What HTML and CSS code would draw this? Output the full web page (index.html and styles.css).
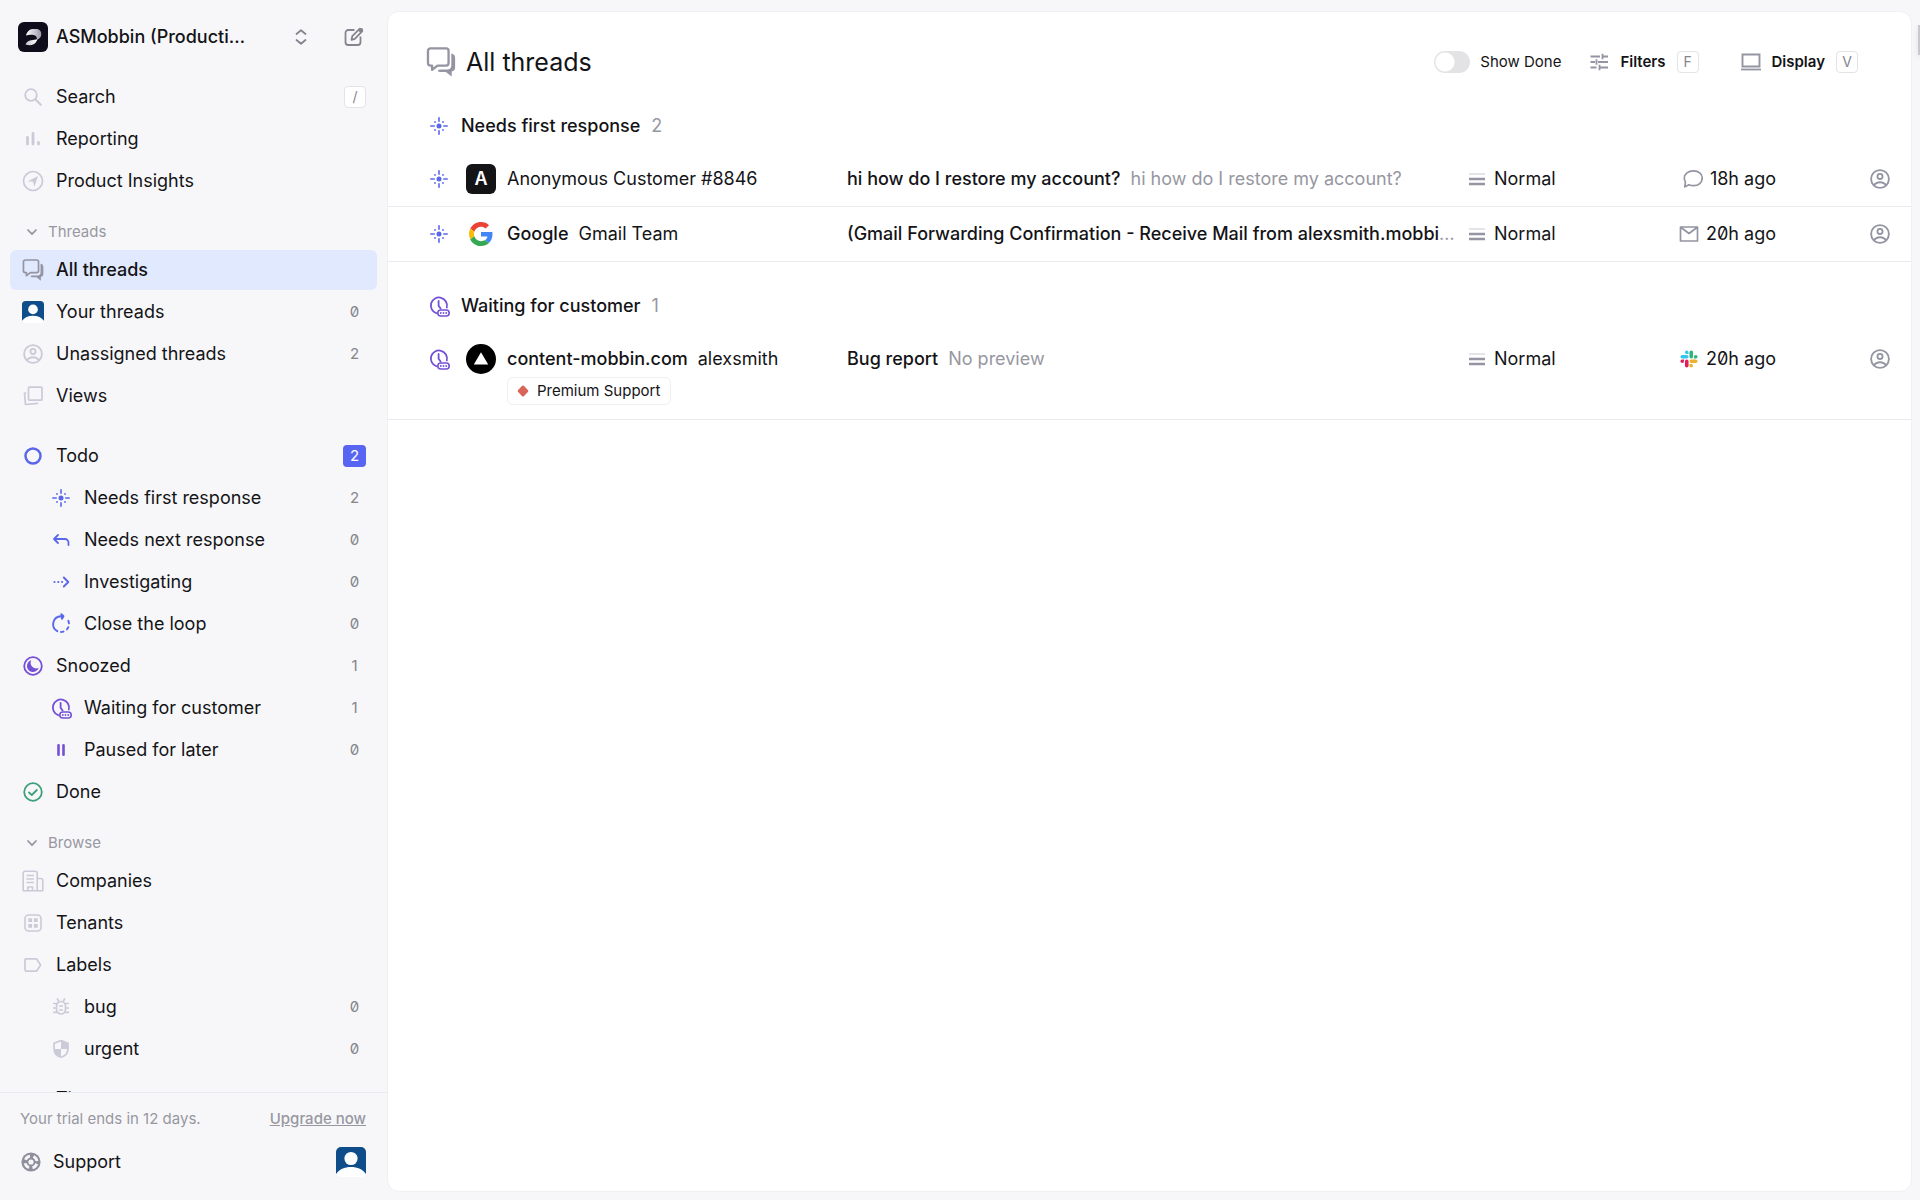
FILE: index.html
```html
<!DOCTYPE html>
<html lang="en">
<head>
  <meta charset="UTF-8">
  <meta name="viewport" content="width=device-width, initial-scale=1.0">
  <title>All threads</title>
  <link rel="stylesheet" href="styles.css">
</head>
<body>
  <!-- Shared icons -->
  <svg class="sprite" aria-hidden="true">
    <symbol id="i-threads" viewBox="1 1.500 21.500 22">
      <path d="M4 2.500h11.500A1.800 1.800 0 0 1 17.300 4.300v9a1.800 1.800 0 0 1-1.800 1.800H9.200L5.200 18.200V15.100H4A1.800 1.800 0 0 1 2.200 13.300v-9A1.800 1.800 0 0 1 4 2.500z" fill="none" stroke="currentColor" stroke-width="1.700" stroke-linejoin="round"/>
      <path d="M19.300 6.300c1.700.3 2.800 1.400 2.800 3v7.200c0 1.700-1 2.700-2.500 2.900v3.800l-4.300-3.400H11c-1 0-1.500-.4-1.500-.8 0-.6.600-.9 1.500-1h5.300c2 0 3-1 3-3z" fill="currentColor"/>
    </symbol>
    <symbol id="i-user" viewBox="0 0 24 24">
      <g fill="none" stroke="currentColor" stroke-width="2">
        <circle cx="12" cy="12" r="9.700"/>
        <circle cx="12" cy="9.200" r="2.800"/>
        <path d="M5.500 19c1.400-2.500 3.800-3.500 6.500-3.500s5.100 1 6.500 3.500"/>
      </g>
    </symbol>
    <symbol id="i-first" viewBox="0 0 20 20">
      <circle cx="10" cy="10" r="2.500" fill="currentColor"/>
      <path d="M10 1.800v3.400M10 14.800v3.400M1.800 10h3.400M14.800 10h3.400" stroke="currentColor" stroke-width="1.600" stroke-linecap="round"/>
      <g fill="currentColor"><circle cx="6" cy="6" r=".9"/><circle cx="14" cy="6" r=".9"/><circle cx="6" cy="14" r=".9"/><circle cx="14" cy="14" r=".9"/></g>
    </symbol>
    <symbol id="i-waiting" viewBox="0 0 22 22">
      <path d="M8.200 18.200A8.100 8.100 0 1 1 18.800 12.500M10.600 6v4.700l2 2.800" fill="none" stroke="currentColor" stroke-width="1.800" stroke-linecap="round"/>
      <rect x="9.800" y="15" width="11.400" height="6" rx="3" fill="none" stroke="currentColor" stroke-width="1.600"/>
      <g fill="currentColor"><circle cx="12.800" cy="18" r=".9"/><circle cx="15.500" cy="18" r=".9"/><circle cx="18.200" cy="18" r=".9"/></g>
    </symbol>
    <symbol id="i-chevron" viewBox="0 0 12 12">
      <path d="M2 4 6 8.200 10 4" fill="none" stroke="currentColor" stroke-width="1.800" stroke-linecap="round" stroke-linejoin="round"/>
    </symbol>
    <symbol id="i-priority" viewBox="0 0 16 14">
      <path d="M0 2h16" stroke="#e3e3e8" stroke-width="2"/>
      <path d="M0 7h16M0 12h16" stroke="currentColor" stroke-width="2.400"/>
    </symbol>
    <symbol id="i-avatar" viewBox="0 0 30 30">
      <rect width="30" height="30" rx="5" fill="#fdfeff"/>
      <path d="M5 0h20a5 5 0 0 1 5 5v22C27 22.500 21.500 20 15 20S3 22.500 0 27V5a5 5 0 0 1 5-5z" fill="#0f4c8a"/>
      <circle cx="15" cy="11.500" r="6.600" fill="#fdfeff"/>
    </symbol>
  </svg>

  <div class="app">
    <aside class="sidebar">
      <header class="workspace">
        <button class="workspace__switch" type="button">
          <svg class="workspace__logo" viewBox="0 0 30 30">
            <defs>
              <linearGradient id="logo-top" x1="0" y1="0" x2="1" y2="0"><stop offset="0" stop-color="#fff"/><stop offset="1" stop-color="#9c99a8"/></linearGradient>
              <linearGradient id="logo-bottom" x1="0" y1="0" x2="1" y2="0"><stop offset="0" stop-color="#c4c2cc"/><stop offset="1" stop-color="#fff"/></linearGradient>
            </defs>
            <rect width="30" height="30" rx="6" fill="#0f0c1c"/>
            <path d="M8 13.500C9.300 8.800 12 7 15.500 7h3c3 0 4.800 2.400 4.800 5 0 2.800-1.400 5-4.300 5.500 0-3-1.500-4.500-4.500-4.700-2.500-.2-4.500 0-6.500.7z" fill="url(#logo-top)"/>
            <path d="M7.500 22.500c1.200-2.800 3-4 5.500-4.300 2.500-.2 4.300-.4 6.500-1.200-1.300 4.200-4 6.200-7.500 6.200-1.700 0-3.200-.2-4.500-.7z" fill="url(#logo-bottom)"/>
          </svg>
          <span class="workspace__name">ASMobbin (Production)</span>
          <svg class="workspace__arrows" viewBox="0 0 12 16"><path d="M1.500 5 6 1.200 10.500 5M1.500 11 6 14.800 10.500 11" fill="none" stroke="currentColor" stroke-width="1.800" stroke-linecap="round" stroke-linejoin="round"/></svg>
        </button>
        <button class="icon-button" type="button" aria-label="New thread">
          <svg viewBox="0 0 20 20"><g fill="none" stroke="currentColor" stroke-width="1.800" stroke-linejoin="round"><path d="M10.500 3H4.200A2.700 2.700 0 0 0 1.500 5.700v9.600A2.700 2.700 0 0 0 4.200 18h9.600a2.700 2.700 0 0 0 2.700-2.700V9.500"/><path d="m7.500 12.800.8-3.600 7.500-7.500 2.500 2.500-7.500 7.600z"/></g><path d="m14 3.500 2-2c1.600-1.500 4.200 1 2.700 2.600l-2 2z" fill="currentColor"/></svg>
        </button>
      </header>

      <nav class="nav">
        <a class="nav__item" href="#">
          <svg class="nav__icon" viewBox="0 0 22 22"><circle cx="9" cy="9" r="5.800" fill="none" stroke="currentColor" stroke-width="1.800"/><path d="m13.300 13.300 5.500 5.500" stroke="currentColor" stroke-width="2" stroke-linecap="round"/></svg>
          <span class="nav__label">Search</span><kbd class="key key--filled">/</kbd>
        </a>
        <a class="nav__item" href="#">
          <svg class="nav__icon" viewBox="0 0 22 22"><path d="M5.500 9.500V16M11 5.500V16M16.500 14.500V16" stroke="currentColor" stroke-width="2.800" stroke-linecap="round"/></svg>
          <span class="nav__label">Reporting</span>
        </a>
        <a class="nav__item" href="#">
          <svg class="nav__icon" viewBox="0 0 22 22"><circle cx="11" cy="11" r="9.500" fill="none" stroke="currentColor" stroke-width="1.700"/><path d="M5.500 11.500 16 6l-3.500 10.500-1.700-5z" fill="currentColor"/></svg>
          <span class="nav__label">Product Insights</span>
        </a>

        <button class="nav__heading" type="button"><svg viewBox="0 0 12 12"><use href="#i-chevron"/></svg>Threads</button>
        <a class="nav__item nav__item--active" href="#">
          <svg class="nav__icon" viewBox="0 0 24 24"><use href="#i-threads"/></svg>
          <span class="nav__label">All threads</span>
        </a>
        <a class="nav__item" href="#">
          <svg class="nav__icon" viewBox="0 0 30 30"><use href="#i-avatar"/></svg>
          <span class="nav__label">Your threads</span><span class="count">0</span>
        </a>
        <a class="nav__item" href="#">
          <svg class="nav__icon" viewBox="0 0 24 24"><use href="#i-user"/></svg>
          <span class="nav__label">Unassigned threads</span><span class="count">2</span>
        </a>
        <a class="nav__item" href="#">
          <svg class="nav__icon" viewBox="0 0 22 22"><g fill="none" stroke="currentColor" stroke-width="1.700" stroke-linejoin="round" stroke-linecap="round"><rect x="6.500" y="2.200" width="13.500" height="13" rx="1"/><path d="M3.500 8 2.500 8.500l1 11 12-1.200"/></g></svg>
          <span class="nav__label">Views</span>
        </a>

        <a class="nav__item nav__item--spaced" href="#">
          <svg class="nav__icon nav__icon--blue" viewBox="0 0 22 22"><circle cx="11" cy="11" r="7.500" fill="none" stroke="currentColor" stroke-width="2.500"/></svg>
          <span class="nav__label">Todo</span><span class="count count--badge">2</span>
        </a>
        <a class="nav__item nav__item--nested" href="#">
          <svg class="nav__icon nav__icon--blue" viewBox="-1 -1 22 22"><use href="#i-first" width="20" height="20"/></svg>
          <span class="nav__label">Needs first response</span><span class="count">2</span>
        </a>
        <a class="nav__item nav__item--nested" href="#">
          <svg class="nav__icon nav__icon--blue" viewBox="0 0 22 22"><path d="M8 6 4 10l4 4M4.500 10H15a3.500 3.500 0 0 1 3.500 3.500v2.500" fill="none" stroke="currentColor" stroke-width="1.800" stroke-linecap="round" stroke-linejoin="round"/></svg>
          <span class="nav__label">Needs next response</span><span class="count">0</span>
        </a>
        <a class="nav__item nav__item--nested" href="#">
          <svg class="nav__icon nav__icon--blue" viewBox="0 0 22 22"><path d="m13.800 6.500 4.500 4.500-4.500 4.500" fill="none" stroke="currentColor" stroke-width="1.900" stroke-linecap="round" stroke-linejoin="round"/><g fill="currentColor"><circle cx="4.500" cy="11" r="1.100"/><circle cx="8.300" cy="11" r="1.100"/><circle cx="12.100" cy="11" r="1.100"/></g></svg>
          <span class="nav__label">Investigating</span><span class="count">0</span>
        </a>
        <a class="nav__item nav__item--nested" href="#">
          <svg class="nav__icon nav__icon--blue" viewBox="0 0 22 22"><g fill="none" stroke="currentColor" stroke-width="1.900" stroke-linecap="round" stroke-linejoin="round"><path d="M7.300 18.200A8 8 0 0 1 11 3.200h2"/><path d="M11.300 1.200 13.500 3.200 12 5.800z" fill="currentColor"/><path d="M11 19a8 8 0 0 0 8-8 8 8 0 0 0-3-6.200" stroke-dasharray="2.600 4"/></g></svg>
          <span class="nav__label">Close the loop</span><span class="count">0</span>
        </a>
        <a class="nav__item" href="#">
          <svg class="nav__icon nav__icon--purple" viewBox="0 0 22 22"><circle cx="11" cy="11" r="8.800" fill="none" stroke="currentColor" stroke-width="1.800"/><path d="M9.300 5.200a6 6 0 1 0 7.400 7.600 5.600 5.600 0 0 1-7.400-7.600z" fill="currentColor"/></svg>
          <span class="nav__label">Snoozed</span><span class="count">1</span>
        </a>
        <a class="nav__item nav__item--nested" href="#">
          <svg class="nav__icon nav__icon--purple" viewBox="0 0 22 22"><use href="#i-waiting"/></svg>
          <span class="nav__label">Waiting for customer</span><span class="count">1</span>
        </a>
        <a class="nav__item nav__item--nested" href="#">
          <svg class="nav__icon nav__icon--purple" viewBox="0 0 22 22"><path d="M8.500 6.200v9.600M13.500 6.200v9.600" stroke="currentColor" stroke-width="2.600" stroke-linecap="round"/></svg>
          <span class="nav__label">Paused for later</span><span class="count">0</span>
        </a>
        <a class="nav__item" href="#">
          <svg class="nav__icon nav__icon--green" viewBox="0 0 22 22"><g fill="none" stroke="currentColor" stroke-width="1.800" stroke-linecap="round" stroke-linejoin="round"><circle cx="11" cy="11" r="8.800"/><path d="m7 11.500 2.800 2.500 5-5"/></g></svg>
          <span class="nav__label">Done</span>
        </a>

        <button class="nav__heading" type="button"><svg viewBox="0 0 12 12"><use href="#i-chevron"/></svg>Browse</button>
        <a class="nav__item" href="#">
          <svg class="nav__icon" viewBox="0 0 22 22"><g fill="none" stroke="currentColor" stroke-width="1.600" stroke-linejoin="round"><path d="M1.200 20.800V3.200A2 2 0 0 1 3.200 1.200h10a2 2 0 0 1 2 2v17.600zM15.200 8.500h3.600a2 2 0 0 1 2 2v10.300h-5.600"/><path d="M4.500 5.500h7.500M4.500 9h7.500M4.500 12.500h7.500M5.800 20.500V17h4.700v3.500"/></g></svg>
          <span class="nav__label">Companies</span>
        </a>
        <a class="nav__item" href="#">
          <svg class="nav__icon" viewBox="0 0 22 22"><rect x="3" y="3" width="16" height="16" rx="3.500" fill="none" stroke="currentColor" stroke-width="1.600"/><path d="M6.300 6.300h3.800v3.800H6.300zM11.900 6.300h3.800v3.800h-3.800zM6.300 11.900h3.800v3.800H6.300zM11.900 11.900h3.800v3.800h-3.800z" fill="currentColor"/></svg>
          <span class="nav__label">Tenants</span>
        </a>
        <a class="nav__item" href="#">
          <svg class="nav__icon" viewBox="0 0 22 22"><path d="M4.300 4.800h10.200L18.600 11l-4.100 6.200H4.300a1.300 1.300 0 0 1-1.300-1.300V6.100a1.300 1.300 0 0 1 1.300-1.300z" fill="none" stroke="currentColor" stroke-width="1.700" stroke-linejoin="round"/></svg>
          <span class="nav__label">Labels</span>
        </a>
        <a class="nav__item nav__item--nested" href="#">
          <svg class="nav__icon" viewBox="0 0 22 22"><g fill="none" stroke="currentColor" stroke-width="1.700"><rect x="6.500" y="5.500" width="9" height="12.500" rx="4.500"/><path d="M7 2.500 9 5.500M15 2.500 13 5.500M3 7.500h4M3 12h3.500M3 16.300h4M15 7.500h4M15.500 12H19M15 16.300h4M9 10h4M9 14h4"/></g></svg>
          <span class="nav__label">bug</span><span class="count">0</span>
        </a>
        <a class="nav__item nav__item--nested" href="#">
          <svg class="nav__icon" viewBox="0 0 22 22"><path d="M11 2.600 4 5.200v5.300c0 4.300 3 7.600 7 8.700 4-1.100 7-4.400 7-8.700V5.200z" fill="none" stroke="currentColor" stroke-width="1.700" stroke-linejoin="round"/><path d="M11 2.600v8.400h7V5.200zM11 11v8.200c-4-1.100-6.500-4-7-8.200z" fill="currentColor"/></svg>
          <span class="nav__label">urgent</span><span class="count">0</span>
        </a>
        <a class="nav__item nav__item--last" href="#">
          <svg class="nav__icon" viewBox="0 0 22 22"></svg>
          <span class="nav__label">Tiers</span>
        </a>
      </nav>

      <footer class="sidebar__footer">
        <div class="trial"><span>Your trial ends in 12 days.</span><a class="trial__link" href="#">Upgrade now</a></div>
        <div class="support">
          <a class="support__link" href="#">
            <svg viewBox="0 0 20 20"><circle cx="10" cy="10" r="9.600" fill="currentColor"/><circle cx="10" cy="10" r="6" fill="none" stroke="#f7f7fa" stroke-width="2.800" stroke-dasharray="5.800 3.625" stroke-dashoffset="-1.800"/><circle cx="10" cy="10" r="2.600" fill="#f7f7fa"/></svg>
            Support
          </a>
          <button class="support__avatar" type="button" aria-label="Account"><svg viewBox="0 0 30 30"><use href="#i-avatar"/></svg></button>
        </div>
      </footer>
    </aside>

    <main class="panel">
      <header class="toolbar">
        <svg class="toolbar__icon" viewBox="0 0 24 24"><use href="#i-threads"/></svg>
        <h1 class="toolbar__title">All threads</h1>
        <label class="switch"><input class="switch__input" type="checkbox"><span>Show Done</span></label>
        <button class="tool-button" type="button">
          <svg viewBox="0 0 20 20"><path d="M1.500 4.500h9.500M14 4.500h5M13.500 1.800v5.400M1.500 10h4.500M9 10h10M7.500 7.200v5.600M1.500 15.500h6M11 15.500h8M10.500 12.800v5.400" fill="none" stroke="currentColor" stroke-width="1.800"/></svg>
          Filters <kbd class="key">F</kbd>
        </button>
        <button class="tool-button" type="button">
          <svg viewBox="0 0 20 20"><path d="M1.500 2.500h17v12h-17z" fill="none" stroke="currentColor" stroke-width="1.900"/><path d="M0 17.500h20" stroke="currentColor" stroke-width="1.800"/></svg>
          Display <kbd class="key">V</kbd>
        </button>
      </header>

      <section class="group">
        <h2 class="group__heading"><svg class="status status--blue" viewBox="-1 -1 22 22"><use href="#i-first" width="20" height="20"/></svg>Needs first response <span class="group__count">2</span></h2>
        <article class="thread">
          <svg class="status status--blue" viewBox="-1 -1 22 22"><use href="#i-first" width="20" height="20"/></svg>
          <span class="thread__avatar thread__avatar--letter">A</span>
          <div class="thread__customer">Anonymous Customer #8846</div>
          <div class="thread__subject"><b>hi how do I restore my account?</b>hi how do I restore my account?</div>
          <div class="thread__priority"><svg viewBox="0 0 16 14"><use href="#i-priority"/></svg>Normal</div>
          <div class="thread__time"><svg viewBox="0 0 20 20"><path d="M10.500 1.800c5.200 0 8.700 3.100 8.700 7.300 0 4.300-3.500 7.600-8.700 7.600-1.700 0-3.200-.3-4.500-1L1.800 17.800l.6-4.600C1.700 12 1.300 10.600 1.300 9.100c0-4.200 3.900-7.300 9.200-7.300z" fill="none" stroke="currentColor" stroke-width="1.700" stroke-linejoin="round"/></svg>18h ago</div>
          <button class="thread__assignee" type="button" aria-label="Assign"><svg viewBox="0 0 24 24"><use href="#i-user"/></svg></button>
        </article>
        <article class="thread">
          <svg class="status status--blue" viewBox="-1 -1 22 22"><use href="#i-first" width="20" height="20"/></svg>
          <svg class="thread__avatar" viewBox="-6 -6 60 60">
            <path fill="#ea4335" d="M24 9.500c3.540 0 6.710 1.220 9.210 3.600l6.850-6.850C35.900 2.380 30.470 0 24 0 14.620 0 6.510 5.380 2.560 13.220l7.980 6.190C12.430 13.720 17.740 9.500 24 9.500z"/>
            <path fill="#4285f4" d="M46.980 24.550c0-1.570-.15-3.090-.38-4.550H24v9.020h12.940c-.58 2.960-2.260 5.480-4.780 7.180l7.730 6c4.510-4.180 7.090-10.360 7.090-17.650z"/>
            <path fill="#fbbc05" d="M10.530 28.590A14.500 14.500 0 0 1 9.770 24c0-1.600.27-3.140.76-4.590l-7.980-6.190A23.900 23.900 0 0 0 0 24c0 3.880.92 7.540 2.560 10.780z"/>
            <path fill="#34a853" d="M24 48c6.480 0 11.930-2.130 15.890-5.810l-7.730-6c-2.150 1.450-4.920 2.300-8.160 2.300-6.260 0-11.570-4.220-13.470-9.910l-7.980 6.190C6.510 42.620 14.620 48 24 48z"/>
          </svg>
          <div class="thread__customer"><b>Google</b>Gmail Team</div>
          <div class="thread__subject"><b>(Gmail Forwarding Confirmation - Receive Mail from alexsmith.mobbin@gmail.com</b></div>
          <div class="thread__priority"><svg viewBox="0 0 16 14"><use href="#i-priority"/></svg>Normal</div>
          <div class="thread__time"><svg viewBox="0 0 20 20"><path d="M1.500 3h17v14h-17zM2 3.500l8 6 8-6" fill="none" stroke="currentColor" stroke-width="1.700" stroke-linejoin="round"/></svg>20h ago</div>
          <button class="thread__assignee" type="button" aria-label="Assign"><svg viewBox="0 0 24 24"><use href="#i-user"/></svg></button>
        </article>
      </section>

      <section class="group">
        <h2 class="group__heading"><svg class="status status--purple" viewBox="0 0 22 22"><use href="#i-waiting"/></svg>Waiting for customer <span class="group__count">1</span></h2>
        <article class="thread">
          <svg class="status status--purple" viewBox="0 0 22 22"><use href="#i-waiting"/></svg>
          <svg class="thread__avatar" viewBox="0 0 30 30"><circle cx="15" cy="15" r="15" fill="#000"/><path d="M15 8.200 22.200 20.500H7.800z" fill="#fff"/></svg>
          <div class="thread__customer"><b>content-mobbin.com</b>alexsmith</div>
          <div class="thread__subject"><b>Bug report</b>No preview</div>
          <div class="thread__priority"><svg viewBox="0 0 16 14"><use href="#i-priority"/></svg>Normal</div>
          <div class="thread__time">
            <svg viewBox="-2 -2 28 28">
              <path fill="#e01e5a" d="M5.042 15.165a2.528 2.528 0 0 1-2.520 2.523A2.528 2.528 0 0 1 0 15.165a2.527 2.527 0 0 1 2.522-2.520h2.520v2.520zm1.271 0a2.527 2.527 0 0 1 2.521-2.520 2.527 2.527 0 0 1 2.521 2.520v6.313A2.528 2.528 0 0 1 8.834 24a2.528 2.528 0 0 1-2.521-2.522v-6.313z"/>
              <path fill="#36c5f0" d="M8.834 5.042a2.528 2.528 0 0 1-2.521-2.520A2.528 2.528 0 0 1 8.834 0a2.528 2.528 0 0 1 2.521 2.522v2.520H8.834zm0 1.271a2.528 2.528 0 0 1 2.521 2.521 2.528 2.528 0 0 1-2.521 2.521H2.522A2.528 2.528 0 0 1 0 8.834a2.528 2.528 0 0 1 2.522-2.521h6.312z"/>
              <path fill="#2eb67d" d="M18.956 8.834a2.528 2.528 0 0 1 2.522-2.521A2.528 2.528 0 0 1 24 8.834a2.528 2.528 0 0 1-2.522 2.521h-2.522V8.834zm-1.268 0a2.528 2.528 0 0 1-2.523 2.521 2.527 2.527 0 0 1-2.520-2.521V2.522A2.527 2.527 0 0 1 15.165 0a2.528 2.528 0 0 1 2.523 2.522v6.312z"/>
              <path fill="#ecb22e" d="M15.165 18.956a2.528 2.528 0 0 1 2.523 2.522A2.528 2.528 0 0 1 15.165 24a2.527 2.527 0 0 1-2.520-2.522v-2.522h2.520zm0-1.268a2.527 2.527 0 0 1-2.520-2.523 2.526 2.526 0 0 1 2.520-2.520h6.313A2.527 2.527 0 0 1 24 15.165a2.528 2.528 0 0 1-2.522 2.523h-6.313z"/>
            </svg>20h ago
          </div>
          <button class="thread__assignee" type="button" aria-label="Assign"><svg viewBox="0 0 24 24"><use href="#i-user"/></svg></button>
          <div class="thread__tags"><span class="tag"><svg viewBox="0 0 12 12"><rect x="1.800" y="1.800" width="8.400" height="8.400" rx="1.500" transform="rotate(45 6 6)" fill="#d9645a"/></svg>Premium Support</span></div>
        </article>
      </section>
    </main>
    <div class="drawer-edge"></div>
  </div>
</body>
</html>
```
FILE: styles.css
```css
* {
  box-sizing: border-box;
}

body {
  margin: 0;
  background: #f7f7fa;
  color: #141417;
  font-family: Inter, "Liberation Sans", sans-serif;
  font-size: 18px;
  line-height: 24px;
  font-feature-settings: "zero";
}

a {
  color: inherit;
  text-decoration: none;
}

button {
  padding: 0;
  border: 0;
  background: none;
  color: inherit;
  font: inherit;
  cursor: pointer;
}

svg {
  display: block;
  flex: none;
}

b {
  font-weight: 500;
}

.sprite {
  display: none;
}

.app {
  display: flex;
  height: 100vh;
}

/* Sidebar */
.sidebar {
  display: flex;
  flex-direction: column;
  width: 387px;
  flex: none;
}

.workspace {
  display: flex;
  align-items: center;
  gap: 37px;
  padding: 21px 23px 0 18px;
}

.workspace__switch {
  display: flex;
  align-items: center;
  gap: 8px;
  flex: 1;
  min-width: 0;
  height: 32px;
  font-weight: 500;
  text-align: left;
}

.workspace__logo {
  width: 30px;
  height: 30px;
}

.workspace__name {
  width: 192px;
  margin-right: auto;
  overflow: hidden;
  text-overflow: ellipsis;
  white-space: nowrap;
}

.workspace__arrows {
  width: 12px;
  height: 16px;
  color: #85858f;
}

.icon-button {
  color: #85858f;
}

.icon-button svg {
  width: 20px;
  height: 20px;
}

.nav {
  display: flex;
  flex-direction: column;
  flex: 1;
  gap: 2px;
  min-height: 0;
  padding: 24px 10px 0;
  overflow: hidden;
}

.nav__item {
  display: flex;
  align-items: center;
  gap: 12px;
  flex: none;
  height: 40px;
  padding: 0 11px 0 12px;
  border-radius: 6px;
}

.nav__item--active {
  background: #e1e9fe;
  font-weight: 500;
}

.nav__item--active .nav__icon {
  color: #9494a3;
}

.nav__item--nested {
  padding-left: 40px;
}

.nav__item--spaced {
  margin-top: 18px;
}

.nav__item--last {
  margin-top: 8px;
}

.nav__icon {
  width: 22px;
  height: 22px;
  color: #cbcad8;
}

.nav__icon--blue {
  color: #5b67ea;
}

.nav__icon--purple {
  color: #7450d6;
}

.nav__icon--green {
  color: #3fa077;
}

.nav__label {
  flex: 1;
}

.nav__heading {
  display: flex;
  align-items: center;
  gap: 10px;
  flex: none;
  height: 24px;
  margin: 17px 0 4px;
  padding-left: 16px;
  color: #9797a1;
  font-size: 15px;
}

.nav__heading svg {
  width: 12px;
  height: 12px;
}

.count {
  width: 23px;
  height: 22px;
  border-radius: 4px;
  color: #85858a;
  font-size: 15px;
  line-height: 22px;
  text-align: center;
}

.count--badge {
  background: #5865f2;
  color: #fff;
}

.key {
  width: 22px;
  height: 22px;
  border: 1px solid #e3e3e8;
  border-radius: 4px;
  color: #85858f;
  font: 14px/20px Inter, "Liberation Sans", sans-serif;
  text-align: center;
}

.key--filled {
  background: #fff;
}

.sidebar__footer {
  padding: 14px 21px 23px 20px;
  border-top: 1px solid #ebebef;
}

.trial {
  display: flex;
  justify-content: space-between;
  color: #9797a1;
  font-size: 15px;
}

.trial__link {
  font-weight: 500;
  text-decoration: underline;
}

.support {
  display: flex;
  align-items: center;
  justify-content: space-between;
  margin-top: 16px;
}

.support__link {
  display: flex;
  align-items: center;
  gap: 11px;
}

.support__link svg {
  width: 22px;
  height: 22px;
  padding: 1px;
  color: #8f8f9d;
}

.support__avatar svg {
  width: 30px;
  height: 30px;
}

/* Main panel */
.panel {
  flex: 1;
  min-width: 0;
  margin: 11px 8px 8px 0;
  border: 1px solid #f0f0f3;
  border-radius: 12px;
  background: #fff;
}

.toolbar {
  display: flex;
  align-items: center;
  height: 88px;
  padding: 12px 53px 0 38px;
  font-size: 15px;
}

.toolbar__icon {
  width: 30px;
  height: 30px;
  color: #9494a3;
}

.toolbar__title {
  margin: 0 auto 0 10px;
  font-size: 25px;
  font-weight: 400;
  line-height: 32px;
}

.switch {
  display: flex;
  align-items: center;
  gap: 10px;
  margin-right: 28px;
}

.switch__input {
  width: 36px;
  height: 22px;
  margin: 0;
  appearance: none;
  border-radius: 12px;
  background: radial-gradient(circle at 11px 11px, #fff 9px, #e3e3e6 10px);
}

.tool-button {
  display: flex;
  align-items: center;
  gap: 11px;
  font-weight: 600;
}

.tool-button + .tool-button {
  margin-left: 42px;
}

.tool-button svg {
  width: 20px;
  height: 20px;
  color: #9494a3;
}

.group + .group {
  margin-top: 18px;
}

.group__heading {
  display: flex;
  align-items: center;
  gap: 11px;
  height: 52px;
  margin: 0;
  padding: 0 40px;
  font-size: 18px;
  font-weight: 500;
}

.group__count {
  color: #9797a1;
  font-weight: 400;
}

.status {
  width: 22px;
  height: 22px;
}

.status--blue {
  color: #5b67ea;
}

.status--purple {
  color: #7450d6;
}

.thread {
  display: grid;
  grid-template-columns: 22px 30px 340px minmax(0, 1fr) 160px 147px 115px;
  align-items: center;
  padding: 12px 20px 12px 40px;
  border-bottom: 1px solid #ebebef;
}

.thread__avatar {
  width: 30px;
  height: 30px;
  margin-left: 16px;
}

.thread__avatar--letter {
  border-radius: 6px;
  background: #141417;
  color: #fff;
  font-weight: 600;
  line-height: 30px;
  text-align: center;
}

.thread__customer {
  margin-left: 27px;
}

.thread__customer b,
.thread__subject b {
  margin-right: 10px;
}

.thread__subject {
  margin-left: 27px;
  padding-right: 11px;
  overflow: hidden;
  color: #9797a1;
  text-overflow: ellipsis;
  white-space: nowrap;
}

.thread__subject b {
  color: #141417;
}

.thread__priority {
  display: flex;
  align-items: center;
  gap: 9px;
}

.thread__priority svg {
  width: 16px;
  height: 14px;
  color: #9494a3;
}

.thread__time {
  display: flex;
  align-items: center;
  justify-content: flex-end;
  gap: 7px;
}

.thread__time svg {
  width: 20px;
  height: 20px;
  color: #9494a3;
}

.thread__assignee {
  justify-self: end;
  color: #9494a3;
}

.thread__assignee svg {
  width: 22px;
  height: 22px;
}

.thread__tags {
  display: flex;
  grid-column: 3 / -1;
  margin: 3px 0 2px 27px;
}

.tag {
  display: flex;
  align-items: center;
  gap: 8px;
  height: 28px;
  padding: 0 10px 0 9px;
  border: 1px solid #efeff2;
  border-radius: 6px;
  font-size: 15px;
}

.tag svg {
  width: 12px;
  height: 12px;
}

/* Collapsed drawer peeking in at the window's right edge */
.drawer-edge {
  position: absolute;
  top: 25px;
  right: 0;
  width: 2px;
  height: 30px;
  background: #c9c9cd;
  box-shadow: 0 2px 6px rgba(0, 0, 0, .15);
}
```
